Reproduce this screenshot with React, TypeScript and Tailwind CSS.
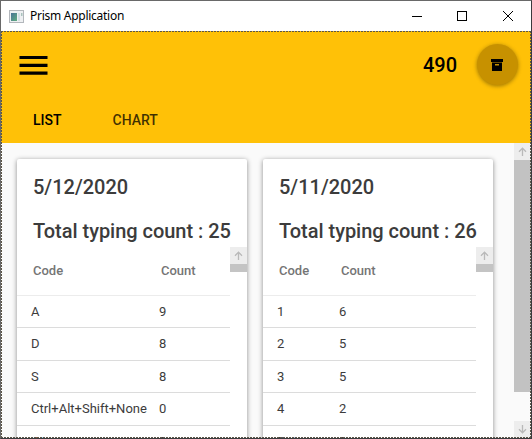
import type { ReactNode } from "react";

type Row = [string, string];

type DayCard = {
  date: string;
  total: string;
  codeWidth: string;
  rows: Row[];
};

const days: DayCard[] = [
  {
    date: "5/12/2020",
    total: "25",
    codeWidth: "w-[128px]",
    rows: [["A", "9"], ["D", "8"], ["S", "8"], ["Ctrl+Alt+Shift+None", "0"], ["W", "0"]],
  },
  {
    date: "5/11/2020",
    total: "26",
    codeWidth: "w-[62px]",
    rows: [["1", "6"], ["2", "5"], ["3", "5"], ["4", "2"], ["Return", "2"]],
  },
];

function Arrow({ down = false }: { down?: boolean }) {
  return (
    <svg
      width="9"
      height="9"
      viewBox="0 0 9 9"
      className={down ? "rotate-180" : ""}
      fill="none"
      stroke="#b9b9b9"
      strokeWidth="1.3"
    >
      <path d="M4.5 9V1.2M1 4.7l3.5-3.5L8 4.7" />
    </svg>
  );
}

function ScrollButton({ children }: { children: ReactNode }) {
  return <div className="flex h-[17px] w-[17px] shrink-0 items-center justify-center bg-[#ededed]">{children}</div>;
}

function TitleBar() {
  return (
    <header className="flex h-[30px] shrink-0 items-center bg-white">
      <svg className="ml-2 shrink-0" width="15" height="13" viewBox="0 0 15 13">
        <defs>
          <linearGradient id="pane" x1="0" y1="0" x2="1" y2="1">
            <stop offset="0" stopColor="#4a7396" />
            <stop offset="1" stopColor="#61ad80" />
          </linearGradient>
        </defs>
        <rect x=".5" y=".5" width="14" height="12" fill="#eef0f2" stroke="#b3b7bc" />
        <rect x="2" y="3" width="6" height="8" fill="url(#pane)" />
        <rect x="9" y="3" width="2" height="8" fill="#d5e0e5" />
        <rect x="12" y="3" width="1.5" height="3" fill="#a9c3bd" />
      </svg>
      <h1 className="ml-[6px] font-['Noto_Sans',sans-serif] text-[12px] leading-4 tracking-[-0.27px] text-black">
        Prism Application
      </h1>
      <svg className="-mt-px ml-auto mr-[17px]" width="102" height="12" viewBox="0 0 102 12" fill="none" stroke="#000" shapeRendering="crispEdges">
        <path d="M0 6.5h10" />
        <rect x="45.5" y="1.5" width="9" height="9" />
        <path d="M91 1l10 10M101 1L91 11" shapeRendering="auto" />
      </svg>
    </header>
  );
}

function AppBar() {
  return (
    <div className="h-[112px] shrink-0 bg-[#ffc107]">
      <div className="flex h-[68px] items-center pl-[18px] pr-[13px]">
        <svg width="29" height="19" viewBox="0 0 29 19">
          <path d="M.5 0h28v3.1H.5zM.5 7.8h28v3.1H.5zM.5 15.6h28v3.1H.5z" />
        </svg>
        <span className="ml-auto text-[20px] font-medium leading-6 text-black">490</span>
        <button className="mb-px ml-5 flex h-[41px] w-[41px] items-center justify-center rounded-full bg-[#c79100] pr-px shadow-[0_1px_4px_rgba(0,0,0,0.4)]">
          <svg width="12" height="12" viewBox="0 0 12 12">
            <path fillRule="evenodd" d="M0 0h12v3H0zM1 3.4h10V12H1zM4 5v1.4h4V5z" />
          </svg>
        </button>
      </div>
      <nav className="flex pl-8 pt-[11px] text-[14px] font-medium leading-5">
        <span className="w-[79.5px] text-black">LIST</span>
        <span className="text-black/75">CHART</span>
      </nav>
    </div>
  );
}

function Card({ day }: { day: DayCard }) {
  return (
    <section className="h-[320px] w-[230px] shrink-0 overflow-hidden rounded-[2px] bg-white shadow-[0_1px_5px_rgba(0,0,0,0.45)]">
      <div className="pl-4 pt-4 text-[20px] font-medium leading-6 text-[#3c3c3c]">
        <h2>{day.date}</h2>
        <p className="mt-5 whitespace-nowrap tracking-[-0.03px]">Total typing count : {day.total}</p>
      </div>
      <div className="mt-1 flex">
        <div className="w-[213px]">
          <div className="flex h-[49px] items-center border-b border-[#ececec] pl-4 text-[13px] font-medium text-[#757575]">
            <span className={day.codeWidth}>Code</span>
            <span>Count</span>
          </div>
          {day.rows.map(([code, count]) => (
            <div key={code} className="flex h-[32.45px] items-center border-b border-[#dcdcdc] pl-[14px] text-[13px] text-[#3c3c3c]">
              <span className={`${day.codeWidth} whitespace-nowrap`}>{code}</span>
              <span>{count}</span>
            </div>
          ))}
        </div>
        <div className="w-[17px]">
          <ScrollButton>
            <Arrow />
          </ScrollButton>
          <div className="h-2 bg-[#c4c4c4]" />
        </div>
      </div>
    </section>
  );
}

export default function App() {
  return (
    <main className="relative flex h-[439px] w-[532px] flex-col overflow-hidden border border-[#696969] border-r-[#3a3a3e] border-b-[#3a3a3e] bg-white font-[Roboto,sans-serif]">
      <TitleBar />
      <AppBar />
      <div className="flex min-h-0 flex-1 bg-[#fafafa]">
        <div className="flex min-w-0 flex-1 gap-4 overflow-hidden pl-[16px] pt-[16px]">
          {days.map((day) => (
            <Card key={day.date} day={day} />
          ))}
        </div>
        <div className="flex w-[17px] shrink-0 flex-col">
          <ScrollButton>
            <Arrow />
          </ScrollButton>
          <div className="h-[232px] bg-[#c2c2c2]" />
          <div className="mt-auto">
            <ScrollButton>
              <Arrow down />
            </ScrollButton>
          </div>
        </div>
      </div>
      <svg className="pointer-events-none absolute left-0 top-[30px]" width="530" height="407" fill="none" stroke="#5c5648" strokeDasharray="2 1" shapeRendering="crispEdges">
        <path d="M0 .5h530M.5 0v407M529.5 0v407M0 406.5h530" />
      </svg>
    </main>
  );
}
